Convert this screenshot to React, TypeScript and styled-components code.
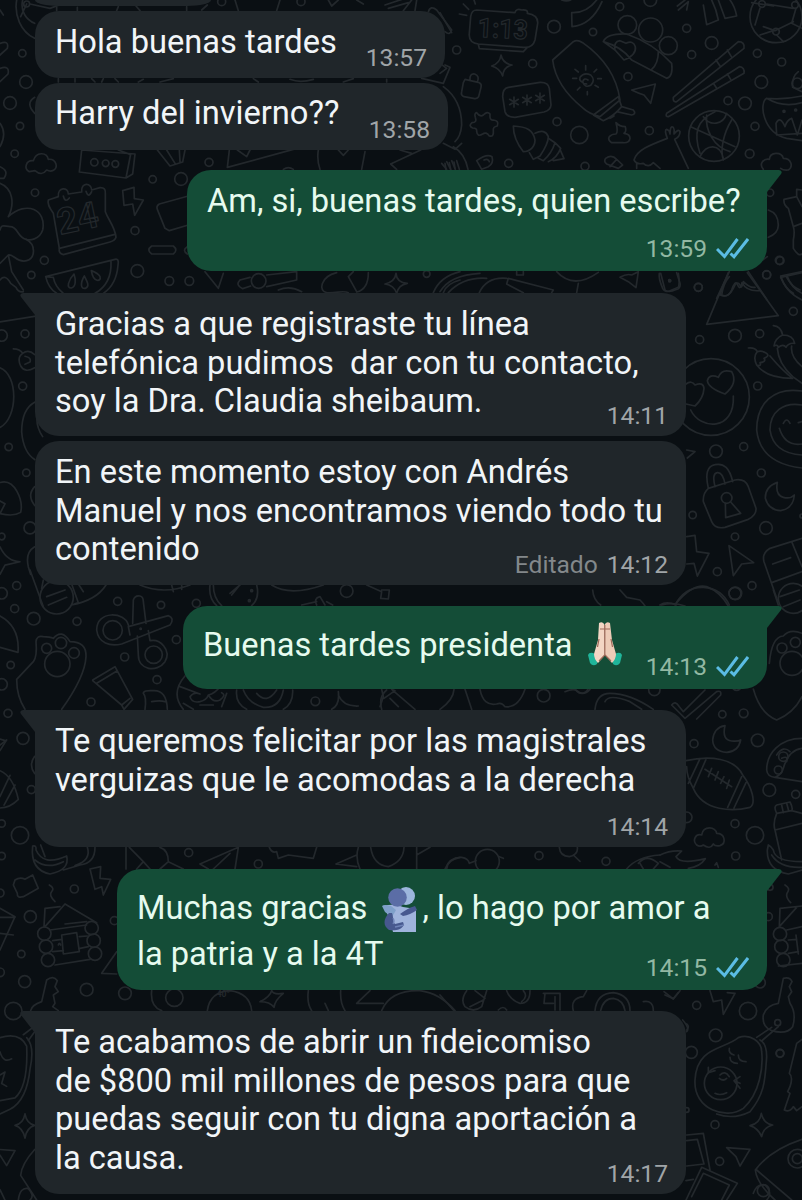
import React from "react";
import styled, { createGlobalStyle } from "styled-components";

const GlobalStyle = createGlobalStyle`
  * { box-sizing: border-box; }
  body { margin: 0; background: #0a0f13; }
`;

const Screen = styled.main`
  position: relative;
  width: 802px;
  height: 1200px;
  overflow: hidden;
  background: #0a0f13;
  font-family: Roboto, "Noto Sans", sans-serif;
`;

const Wallpaper = styled.svg`
  position: absolute;
  inset: 0;
  width: 802px;
  height: 1200px;
  fill: none;
  stroke: #23282c;
  stroke-width: 1.7;
  stroke-linecap: round;
  stroke-linejoin: round;
  path, circle, rect, ellipse, text { vector-effect: non-scaling-stroke; }
  text { font-family: Roboto, sans-serif; font-weight: 700; stroke-width: 1.2; }
`;

const Thread = styled.section`
  position: relative;
  display: flex;
  flex-direction: column;
  padding: 0 35px;
`;

const EarlierBubble = styled.div`
  width: 176px;
  height: 6px;
  background: #20262a;
  border-radius: 0 0 24px 24px / 0 0 6px 6px;
`;

type Side = "in" | "out";

const Bubble = styled.article<{ $side: Side; $w: number; $h: number; $gap: number; $tail?: boolean }>`
  position: relative;
  display: grid;
  flex: none;
  align-self: ${(p) => (p.$side === "in" ? "flex-start" : "flex-end")};
  width: ${(p) => p.$w}px;
  height: ${(p) => p.$h}px;
  margin-top: ${(p) => p.$gap}px;
  background: ${(p) => (p.$side === "in" ? "#20262a" : "#144d37")};
  color: ${(p) => (p.$side === "in" ? "#f1f5f8" : "#e6fbef")};
  border-radius: 24px;
  border-top-left-radius: ${(p) => (p.$tail && p.$side === "in" ? 0 : 24)}px;
  border-top-right-radius: ${(p) => (p.$tail && p.$side === "out" ? 0 : 24)}px;
`;

const Tail = styled.svg<{ $side: Side }>`
  position: absolute;
  top: 0;
  ${(p) => (p.$side === "in" ? "left: -15px;" : "right: -15px; transform: scaleX(-1);")}
  width: 16px;
  height: 23px;
  fill: ${(p) => (p.$side === "in" ? "#20262a" : "#144d37")};
`;

const Body = styled.p<{ $top: number; $leading: number }>`
  grid-area: 1 / 1;
  place-self: start;
  margin: 0;
  padding: ${(p) => p.$top}px 0 0 20px;
  font-size: 32.65px;
  line-height: ${(p) => p.$leading}px;
  white-space: pre;
`;

const Meta = styled.footer<{ $side: Side }>`
  grid-area: 1 / 1;
  place-self: end;
  display: flex;
  align-items: center;
  gap: 9px;
  padding: 0 18px ${(p) => (p.$side === "in" ? 8 : 10)}px 0;
  font-size: 24.6px;
  line-height: 24px;
  color: ${(p) => (p.$side === "in" ? "#a0a5a8" : "#92b8a3")};
`;

const Edited = styled.span`
  color: #83888b;
`;

const TickIcon = styled.svg`
  width: 33px;
  height: 22px;
  margin-top: -2px;
  fill: none;
  stroke: #5bbce4;
  stroke-width: 3;
`;

const EmojiArt = styled.svg<{ $w: number; $left: number; $right: number; $rise: number }>`
  display: inline-block;
  width: ${(p) => p.$w}px;
  height: 45px;
  margin: -12px ${(p) => p.$right}px -12px ${(p) => p.$left}px;
  vertical-align: ${(p) => p.$rise}px;
`;

const Ticks = () => (
  <TickIcon viewBox="0 0 33 22">
    <path d="M1 12 L8.5 19.5 L21.5 2" />
    <path d="M14.5 16.5 L18 19.8 L32 2" />
  </TickIcon>
);

const FoldedHands = () => (
  <EmojiArt $w={34} $left={7} $right={0} $rise={1} viewBox="0 0 34 45" role="img" aria-label="🙏🏻">
    <path d="M0 33 Q1 30 5 31 L11 34 L9 42 Q5 45 2 41Z" fill="#20b59a" />
    <path d="M34 33 Q33 30 29 31 L23 34 L25 42 Q29 45 32 41Z" fill="#20b59a" />
    <path d="M11 1 Q15 -1 16.6 3 L17 33 L10 41 Q6 37 6 32 L10 18Z" fill="#f3d6c4" />
    <path d="M22 1 Q18 -1 16.6 3 L17 33 L24 41 Q28 37 28 32 L24 18Z" fill="#edcbb7" />
    <path d="M16.8 3 V33 L11 39 M17 33 L23 39 M12 7 H22 M11 17 L9.5 25 M23 17 L24.5 25" fill="none" stroke="#9c6757" strokeWidth="1.2" />
  </EmojiArt>
);

const PeopleHugging = () => (
  <EmojiArt $w={36} $left={6} $right={5} $rise={-1} viewBox="0 0 36 45" role="img" aria-label="🫂">
    <circle cx="25" cy="9" r="9" fill="#9db6dc" />
    <path d="M2 19 Q14 16 22 20 L35 22 V45 H12 L8 30Z" fill="#9fb3dc" />
    <path d="M1 19 Q3 17 10 19 L15 23 L11 30 L4 25Z" fill="#7fa0ca" />
    <circle cx="16.5" cy="10.5" r="9.3" fill="#5b6da6" />
    <path d="M8 26 C2 32 2 39 8 43 C14 44 20 43 23 38 L22 35 L14 37 C11 34 13 31 11 26Z" fill="#47588f" />
    <path d="M19 27 Q27 21 34 19 L36 23 Q29 28 22 29Z" fill="#47588f" />
    <path d="M12 31 Q14 34 12 37 M23 38 L14 40" stroke="#6f83b8" fill="none" strokeWidth="1.3" />
  </EmojiArt>
);

interface PatchProps {
  x: number;
  y: number;
  sy?: number;
  d: string[];
  dots: number[][];
  children?: React.ReactNode;
}

/* One region of wallpaper doodles, authored on a 3x grid. */
const Patch = ({ x, y, sy = 1 / 3, d, dots, children }: PatchProps) => (
  <g transform={`translate(${x} ${y}) scale(${1 / 3} ${sy})`}>
    {d.map((path) => (
      <path key={path} d={path} />
    ))}
    {dots.map(([cx, cy, r]) => (
      <ellipse key={`${cx}-${cy}`} cx={cx} cy={cy} rx={r} ry={r / 3 / sy} />
    ))}
    {children}
  </g>
);

const Doodles = () => (
  <Wallpaper viewBox="0 0 802 1200" aria-hidden="true">
    <Patch
      x={0}
      y={0}
      dots={[
        [67, 160, 11], [78, 246, 19], [30, 309, 19], [60, 378, 11], [44, 461, 11], [283, 487, 11], [317, 490, 10], [346, 492, 10],
        [458, 538, 11], [543, 537, 19], [627, 487, 12], [105, 578, 11], [405, 692, 12], [133, 781, 12], [94, 825, 11], [412, 813, 19],
        [508, 843, 13], [568, 843, 13], [80, 12, 9], [665, 5, 12], [776, 843, 22], [1280, 822, 10], [1370, 150, 12], [903, 5, 12],
      ]}
      d={[
        "M50 0 C42 45 62 95 104 115 M68 0 C60 35 80 60 104 70 M90 12 L150 25 L190 10 M62 50 L80 12",
        "M0 130 Q28 120 22 145 L0 165 M0 205 Q30 195 24 222 L0 245 M0 30 L10 45",
        "M170 22 V32 M232 22 V32 M355 20 L350 32 M408 18 L420 32 M560 20 V32 M622 15 L605 30 M705 0 L715 32 M840 0 L830 32",
        "M985 0 L995 18 L1015 0 M1070 0 L1090 12 M1155 15 L1215 -5 M1165 25 L1225 8 M1235 0 L1210 32 M1250 0 L1245 32",
        "M1285 35 Q1292 15 1310 30 L1355 90 Q1350 108 1335 95 M1335 195 L1350 202 L1330 250 L1265 235",
        "M175 236 V246 M225 236 V246 M275 236 L285 246 M310 236 L305 246 M345 236 L355 246 M430 238 L415 246 M520 236 L480 246 M760 236 L775 246 M870 238 Q900 250 940 238 M1060 236 L1030 246 M1160 238 V246",
        "M104 292 Q75 310 104 340 M0 370 Q22 400 0 440 M0 500 Q28 512 12 535 H0",
        "M88 515 C70 505 78 480 100 482 C108 455 140 455 145 478 C168 475 178 505 158 512 Q150 515 140 510 Q125 530 105 512 Z",
        "M245 450 L405 462 L398 522 L378 534 L238 516 Z M392 462 L378 534 M355 450 L392 464",
        "M472 450 L510 498 L548 486 L555 450 M500 450 L525 490 M538 450 L540 485",
        "M688 450 L682 502 L880 448 M712 450 L740 470 L750 450 M955 450 Q950 480 960 508 M1015 450 L1030 466 L1045 450 M1095 455 L1085 508",
        "M1172 492 L1262 450 M1172 492 L1190 508 M1325 490 L1340 508 M1340 485 L1352 508 M1355 482 L1366 508 M1370 482 L1378 508 M850 508 Q865 498 880 508 M1200 450 L1235 460",
        "M145 600 L175 590 C172 560 205 560 205 582 L245 576 C242 545 275 548 275 570 L300 563 Q318 562 316 580 V635 C325 660 345 680 348 712 Q345 722 330 726 L190 764 Q175 760 178 745 L160 640 Q140 612 145 600 Z",
        "M178 745 L345 703 M190 588 Q195 610 208 594 M258 574 Q265 596 275 575",
        "M368 572 L402 562 L403 596 L430 600 L404 646 L398 612 L372 616 Z",
        "M565 588 L478 612 Q468 618 472 628 L495 685 L508 692 L565 675",
        "M455 738 H520 Q535 750 520 762 H455 Q438 750 455 738 Z M562 740 Q545 750 562 762",
        "M0 550 C38 565 45 610 25 650 M25 650 C80 600 140 630 128 690 C118 720 88 722 78 718 C50 710 55 680 30 680 C15 680 5 670 0 690",
        "M78 718 C110 735 105 775 80 782 C50 790 40 760 25 765 L35 815 L70 870 M0 790 L25 765 M0 840 Q15 820 32 850 L48 862 Q55 878 70 875",
        "M137 830 L345 778 Q358 775 354 795 C350 850 325 870 310 880 M137 830 Q145 865 170 880 M160 832 Q165 860 190 880 M333 785 C335 830 320 860 285 880 M137 830 L160 832",
        "M222 822 C205 840 198 865 214 864 C228 860 228 840 222 822 Z M253 828 C240 850 242 868 256 865 C270 860 262 845 253 828 Z M274 812 C280 850 305 845 300 830 Q295 820 274 812 Z",
        "M615 815 L655 865 L670 820 M720 840 L750 832 M800 825 L890 815 V840 L800 860 M752 858 L728 866 Q705 855 720 840 M835 870 Q870 855 905 875",
        "M1010 818 C960 830 955 875 980 878 C1010 880 1030 870 1045 878 M1060 815 L1045 830 L1070 875 M1105 818 C1105 850 1095 870 1070 876 M1188 820 Q1190 848 1222 850 Q1195 855 1190 880 Q1182 855 1155 852 Q1185 845 1188 820 M1300 878 Q1320 830 1380 815 M1330 878 Q1340 850 1380 840",
      ]}
    >
      <text x="0" y="0" fontSize="108" transform="translate(180 704) rotate(-12)">24</text>
    </Patch>

    <Patch
      x={440}
      y={0}
      dots={[
        [342, 80, 19], [278, 191, 12], [459, 96, 11], [539, 20, 12], [631, 0, 19], [740, 85, 12], [815, 129, 19], [755, 164, 12],
        [952, 160, 12], [1025, 186, 12], [964, 246, 19], [864, 302, 12], [915, 310, 19], [945, 379, 12], [628, 392, 12], [564, 230, 12],
        [351, 365, 12], [418, 405, 26], [206, 490, 12], [435, 499, 12], [929, 461, 13], [562, 75, 28], [632, 90, 36], [685, 137, 27],
        [822, 408, 76], [1008, 50, 78], [966, 12, 10], [1008, 95, 10], [1065, 15, 10], [1032, 334, 3], [1067, 330, 3], [990, 578, 11],
        [1018, 781, 12], [980, 825, 12], [775, 862, 12], [689, 842, 3], [1072, 250, 16],
      ]}
      d={[
        "M110 30 L225 38 Q228 24 245 30 Q265 28 262 40 Q295 45 293 70 L285 120 Q278 145 250 142 L115 132 Q85 128 88 100 L92 50 Q95 30 110 30 Z M115 133 L118 146 L250 155 L262 142",
        "M58 42 L80 46 M70 12 L86 28 M102 0 L106 12 M0 38 L35 98",
        "M183 165 Q188 190 216 195 Q190 200 188 228 Q180 205 155 198 Q180 190 183 165 Z",
        "M75 238 L118 248 Q126 252 123 262 L116 290 Q112 298 100 295 L72 290 Q62 286 65 275 L70 248 Z M90 240 Q88 220 104 222 Q120 228 112 246",
        "M205 262 L300 247 Q325 246 328 265 L333 315 Q332 330 312 336 L225 352 Q200 352 195 335 L188 290 Q188 265 205 262 Z",
        "M395 38 Q440 40 470 0 M395 38 L396 80 Q455 75 486 5 M392 0 Q380 5 365 0",
        "M338 180 L400 125 Q412 118 428 128 C495 175 530 230 540 300 L480 350 Q445 340 430 325 C380 285 345 240 338 180 Z M460 345 L535 290 L545 320 Q520 350 490 362 Z M545 320 L580 330 Q590 342 575 345 L530 335 M510 355 L522 348",
        "M440 252 Q415 245 420 232 Q432 215 452 225 Q468 240 452 256 Q435 265 428 245 Q432 232 444 240 M437 197 V210 M470 208 L462 216 M484 236 H473 M475 262 L465 256 M442 275 V284 M412 270 L420 262 M398 235 H410 M405 208 L415 216",
        "M490 125 Q500 100 560 102 Q640 130 695 190 Q700 230 680 235 L575 180 Q545 140 490 125 M490 125 L525 150 M655 155 Q655 190 635 208 M552 180 L525 150 Q520 125 540 122 L558 130 Q580 120 586 140 Q590 165 552 180 Z",
        "M575 270 L646 252 L632 310 L612 285 Q595 280 575 270 Z",
        "M700 292 L895 125 Q915 125 912 145 L710 305 Q698 308 700 292 Z M680 340 L898 200 Q915 202 912 220 L685 350 Q675 350 680 340 Z M828 180 L840 198 M862 150 L874 170 M820 250 L830 265 M862 222 L872 238",
        "M715 30 L745 5 L740 30 M790 15 L800 74 L835 60 Q830 30 815 0 M855 55 L890 48 Q885 20 870 0 M855 55 L835 0 M712 18 L735 0",
        "M935 8 L1000 18 M980 12 L1060 25 M960 25 L945 75 M970 80 L1005 92 L1060 65 M1010 105 L1030 125 M1068 25 L1055 70 L1086 85 M1000 92 L960 105",
        "M1075 215 Q1055 230 1058 262 L1086 275 M980 295 Q1030 300 1086 288 M980 295 C955 310 970 400 1040 415 L1086 422 M980 295 Q1030 325 1086 308 M1010 405 L1008 370 Q1020 345 1035 380 Q1040 360 1055 355 L1072 405 L1086 360 M1010 405 L1086 400",
        "M110 338 Q120 352 130 345 Q142 332 150 342 Q148 362 160 360 Q178 362 172 378 Q158 380 160 392 Q162 412 148 408 Q138 394 128 402 Q112 412 110 395 Q112 384 98 384 Q84 378 96 368 Q112 368 106 352 Q102 340 110 338 Z",
        "M220 378 C260 380 280 390 285 420 C285 440 270 455 250 455 C230 430 220 405 220 378 Z M285 400 Q315 385 325 410 Q325 430 300 468 L280 478 L268 458 M325 415 L345 428 Q335 460 310 482 L295 475 M345 428 L362 445 Q350 475 325 485 M360 448 L372 476 L340 482",
        "M528 368 Q538 380 556 380 Q560 395 552 400 Q570 402 570 415 Q568 430 548 428 H515 Q502 420 508 410 Q515 402 528 402 Q535 395 528 368",
        "M582 480 C590 450 630 435 682 415 Q672 390 680 388 Q690 392 690 402 Q690 375 700 382 Q705 390 702 402 Q715 385 720 395 Q720 410 704 418 L745 505 M582 480 Q590 495 610 490 Q625 505 640 488 L660 505 M590 492 V505",
        "M497 475 Q515 462 530 478 L548 495 L535 505 L500 492 Q490 485 497 475 M510 500 L530 478",
        "M825 335 C770 360 760 400 780 460 M790 350 C810 380 850 375 860 340 M752 380 L885 440 M780 470 C800 430 840 430 850 475 M875 360 C850 400 840 450 850 480 M800 345 C795 390 820 440 870 455",
        "M970 508 C955 490 972 475 988 478 C990 455 1025 455 1030 475 C1055 475 1060 500 1045 510 Q1030 512 1022 505",
        "M1086 570 L1070 568 V590 L1032 598 Q1030 615 1045 625 L1060 680 Q1065 695 1060 720 V745 Q1075 770 1086 762 M1070 590 L1086 620 M1060 680 L1086 670",
        "M985 630 Q1015 640 1015 675 Q1015 700 985 712 M968 780 L982 770",
        "M10 260 Q65 300 65 375 Q62 410 45 425 M10 430 L45 448 L65 430 M40 440 Q75 460 84 508 M15 490 L18 508 M28 488 L32 508 M42 486 L45 505 M110 482 Q140 460 156 470 Q162 490 145 500 L125 508 Z M132 480 Q145 475 148 485 M0 190 L20 205 L0 220",
        "M0 875 Q30 825 120 820 M25 878 Q70 830 140 835 M118 878 Q140 830 200 835 M205 835 L340 870 L335 878 M205 835 L200 852 L250 878 M350 815 Q400 870 475 817 M415 850 L410 878 M230 815 V825 H250 V815",
        "M540 832 Q560 820 575 825 L595 815 L588 863 L565 845 Z M658 820 Q655 835 668 865 Q675 878 690 872 L715 862 Q720 850 715 820",
        "M868 815 L830 895 M925 815 L980 898 M868 830 Q850 850 845 885 Q865 895 880 865 Q890 840 900 855 Q905 870 910 845 Q930 865 945 862 M1022 832 L1086 818 M1022 832 Q1040 870 1060 880 M1040 832 Q1055 860 1080 870",
      ]}
    >
      <text x="0" y="0" fontSize="80" textLength="150" lengthAdjust="spacingAndGlyphs" transform="translate(112 110) rotate(3)">1:13</text>
      <g stroke="#23282c">
        <path d="M222 291 V321 M209 298 L235 314 M209 314 L235 298 M261 285 V315 M248 292 L274 308 M248 308 L274 292 M300 279 V309 M287 286 L313 302 M287 302 L313 286" />
      </g>
    </Patch>

    <Patch
      x={660}
      y={260}
      dots={[
        [115, 82, 12], [320, 44, 12], [400, 154, 12], [119, 239, 12], [225, 227, 19], [299, 221, 12], [293, 378, 12], [153, 411, 115],
        [168, 574, 19], [251, 560, 12], [304, 639, 12], [318, 804, 19], [98, 765, 11], [225, 830, 11], [172, 935, 12], [226, 1000, 19],
        [276, 977, 12], [200, 714, 16], [360, 2, 12], [29, 62, 3], [400, 1015, 45], [426, 768, 6],
      ]}
      d={[
        "M2 40 L15 90 Q25 100 50 88 Q62 85 60 70 L50 38 M205 38 L140 193 L355 167 L262 38 M205 38 Q190 70 180 105 Q205 115 215 90 Q225 60 232 72 Q240 95 246 68 Q260 95 298 92",
        "M362 48 L426 35 M362 48 Q375 95 426 120 M382 50 Q395 85 426 100",
        "M340 197 Q362 198 368 225 Q345 235 342 258 Q352 252 355 262 Q370 250 378 262 Q385 248 404 250 Q400 225 368 225 M352 265 Q355 310 398 350 L426 370 M395 258 Q390 290 426 320",
        "M265 264 Q285 262 292 275 Q278 290 290 315 Q305 320 300 308 Q320 305 312 295 Q330 288 320 280 Q305 270 292 275 M290 315 Q320 355 398 355 Q370 335 330 288",
        "M78 372 Q95 360 105 375 Q130 365 132 385 Q130 415 105 438 L78 432 M142 362 Q148 340 175 352 Q185 325 215 335 Q235 370 195 402 Q145 385 142 362 Z M92 450 C120 510 225 515 220 408",
        "M426 393 C340 380 290 430 290 510 Q300 610 426 624 M426 435 C370 425 330 455 330 510 Q340 580 426 585 M358 505 Q375 560 426 552 M370 490 Q380 470 390 490 M415 488 L426 485",
        "M80 570 L105 575 L82 594 M145 685 Q130 620 165 614 Q205 605 218 665 M165 680 Q155 640 172 638 Q188 636 195 672 M145 685 L225 660 Q255 655 265 680 L288 745 Q290 765 265 778 L195 802 Q165 808 155 785 L130 725 Q128 700 145 685 Z M196 730 L197 773 L242 760 L212 726",
        "M352 667 Q345 705 370 712 Q390 718 403 705 Q400 745 362 752 Q325 750 316 715 Q315 680 352 667 Z",
        "M80 830 L105 826 L110 875 L147 880 L112 948 L102 910 L80 912 M207 857 L281 908 L245 912 L220 947 Z",
        "M426 835 L330 865 Q305 880 312 905 L352 1020 M395 845 L426 920 M338 912 L392 893 M335 968 L426 935 M360 1010 L418 990 M370 1040 L420 1020 M45 1035 Q75 980 130 982 Q185 985 208 1035 M0 1035 Q20 1022 48 1035",
      ]}
    />

    <Patch
      x={0}
      y={570}
      dots={[
        [5, 70, 17], [50, 47, 12], [44, 116, 12], [101, 146, 19], [231, 154, 12], [32, 285, 11], [5, 343, 17], [24, 430, 12],
        [353, 94, 12], [483, 105, 11], [529, 209, 12], [374, 261, 12], [471, 329, 12], [273, 396, 12], [183, 219, 17], [140, 235, 15],
        [222, 249, 16], [172, 282, 38], [338, 181, 29], [461, 254, 26], [589, 100, 12], [1040, 63, 19], [946, 394, 13], [170, 82, 50],
        [422, 176, 2], [755, 62, 3], [748, 92, 3], [69, 505, 18],
      ]}
      d={[
        "M0 138 Q60 170 54 247 L0 232 M90 0 L130 110 M130 30 L125 55 M215 42 L235 98 L215 105 Q290 90 318 45 M235 42 L250 65 M140 80 L195 60 M145 105 L200 82",
        "M420 45 Q490 75 570 45 M515 45 L520 65 M545 45 V58 M630 45 Q625 85 650 107 M640 45 Q640 85 665 107 M770 45 Q780 85 755 107 M690 70 L720 45 M695 75 L715 50 M815 45 Q870 80 970 45 M905 105 L950 95 M950 105 Q940 85 960 80 L975 105 M980 95 L998 105 M1100 45 L1145 65 L1142 85 L1165 87 L1168 60 L1145 60",
        "M108 215 Q110 195 130 200 Q150 200 160 205 Q185 175 210 215 Q260 215 258 260 Q255 320 185 418 M108 215 Q112 260 100 275 L50 328 Q50 380 75 418",
        "M385 165 C375 125 290 120 290 180 C295 220 330 230 365 222 L510 165 Q525 145 505 137 L385 170 L390 195 M398 160 L400 90 Q405 75 420 78 Q430 80 430 95 L438 160 M412 198 L415 255 C415 300 470 310 495 275 C515 240 480 205 450 212 L445 182",
        "M278 330 L345 290 L398 388 L372 418 L365 405 L278 332 M290 340 L352 302 M365 405 L390 385 M430 370 Q430 360 460 362 Q500 360 502 418 M430 370 Q440 380 435 418 M455 395 Q480 390 495 395",
        "M555 318 Q510 370 550 418 M600 372 Q580 365 570 380 Q575 400 600 395 Q620 390 625 375 Q640 400 660 390 Q680 375 665 368 M540 350 L600 372 M550 400 L580 418 M600 405 H640 M680 370 L665 410 M660 350 Q645 370 625 375 M710 360 Q705 400 740 418 M730 360 Q745 400 790 412 Q840 415 850 360 M878 360 Q880 400 850 418 M770 370 Q800 405 830 360 M1015 365 Q1020 405 995 418 M1015 375 Q1030 410 1075 408 M1145 418 Q1135 380 1160 360 M1170 385 L1195 410",
        "M0 525 L20 510",
      ]}
    />

    <Patch
      x={560}
      y={590}
      dots={[[525, 10, 18], [487, 373, 11], [551, 370, 13], [666, 174, 15], [706, 157, 15], [696, 220, 36], [283, 300, 17], [65, 290, 20]]}
      d={[
        "M98 0 Q100 30 122 45 M180 0 L200 22 L240 30 Q250 40 255 48 M305 45 Q340 35 375 48 M350 38 Q400 -20 440 -10 Q480 5 505 48 M640 0 L655 45",
        "M628 220 Q635 140 670 138 Q690 115 726 130 M580 297 Q600 370 650 390 Q700 370 726 320 M105 358 Q110 310 150 310 Q210 310 280 358 M135 335 Q145 310 210 335 L245 358 M335 345 Q345 330 358 350 L370 365 L435 300 M335 345 L375 385 L470 305 Q485 300 482 315 L410 387 M520 297 Q530 305 540 297",
      ]}
    />

    <Patch
      x={380}
      y={680}
      dots={[[491, 47, 19]]}
      d={[
        "M5 28 L10 50 L0 80 M12 55 L45 32 L35 28 L105 88 M180 88 Q220 60 222 28 M255 28 L275 88 M300 28 Q310 80 350 72 Q365 65 375 80 Q415 85 435 28 M555 35 Q580 25 590 32 Q610 50 630 28",
      ]}
    />

    <Patch
      x={660}
      y={680}
      dots={[[102, 191, 12], [293, 181, 19], [328, 330, 19], [407, 343, 12], [225, 431, 12], [285, 466, 26], [227, 528, 12], [80, 412, 16], [370, 230, 14], [355, 270, 12]]}
      d={[
        "M195 137 Q185 180 215 183 Q235 185 242 180 Q235 215 200 217 Q160 215 158 180 Q162 142 195 137 Z",
        "M78 242 C150 225 225 235 248 285 C275 320 290 370 270 382 C220 395 130 395 100 325 Q80 290 80 260 M120 236 L85 310 M138 238 L100 325 M245 290 L203 382 M258 308 L222 384 M135 268 L215 320 M155 265 L145 290 M175 275 L165 300 M192 290 L182 310 M208 300 L200 325",
        "M426 175 C360 175 320 220 320 270 Q322 290 345 292 L426 305 M426 205 Q385 210 370 265 Q365 285 345 292 M350 225 Q370 195 390 215 M365 235 Q385 225 380 245",
        "M110 495 C95 480 108 460 125 465 C130 435 168 440 170 460 C195 460 200 490 180 497 Q165 500 160 492 Q150 510 130 495 Q120 502 110 495 Z",
        "M350 400 Q340 380 350 375 L390 366 Q400 385 395 392 M365 375 L370 398 M380 370 L386 392 M350 400 L395 392 L426 400 M350 400 Q338 430 345 450 L365 540 M345 450 L426 430",
        "M325 495 Q335 500 340 510 Q345 545 426 545 M322 510 Q320 570 385 582 L426 570 M325 495 L322 510 M335 525 Q360 565 426 562",
        "M0 525 Q30 510 65 513 L48 530 Q60 555 136 536 Q120 560 85 565 M0 545 L30 562 M165 555 L170 548 L175 562",
      ]}
    />

    <Patch
      x={0}
      y={820}
      dots={[
        [60, 46, 26], [5, 108, 11], [566, 98, 12], [775, 132, 12], [223, 207, 12], [91, 290, 18], [64, 402, 11], [0, 219, 12], [0, 457, 13],
        [74, 485, 18], [40, 573, 26], [260, 509, 19], [375, 520, 19], [523, 533, 26], [343, 302, 12], [133, 341, 20], [138, 380, 20],
        [144, 420, 20], [275, 324, 20], [281, 362, 20], [285, 401, 20],
      ]}
      d={[
        "M98 78 Q110 75 108 90 Q130 140 200 108 Q210 150 150 162 Q90 150 98 78 M105 120 Q140 150 190 125 M122 75 L135 110 M190 150 L240 135 Q285 130 285 82 M262 82 Q275 120 225 137",
        "M45 180 Q60 170 75 178 L98 165 L115 205 L70 230 Q50 235 52 220 L40 195 Z M148 195 Q165 205 155 215 Q145 225 165 245",
        "M270 147 L302 140 L300 175 L332 178 L310 225 L305 200 L285 208 Z M378 82 V147 M388 82 L430 125 L410 147 M430 125 L450 147 M480 82 Q505 90 505 125 L550 147 M505 125 L480 147 M600 132 L715 82 L705 147 M600 132 L625 147 M640 147 L690 100 M808 82 Q815 100 830 95 L835 115 L865 105 L940 115 L950 82 M1008 132 L1070 105 M1008 132 L1070 140 M1075 82 Q1065 115 1080 147 M1112 82 Q1120 135 1165 140 Q1210 125 1212 82 M1250 82 V147 M1250 105 L1290 82 M1340 147 Q1340 120 1380 112",
        "M0 265 L45 290 L0 390 M0 292 L45 292 M0 340 L40 345 M132 320 L135 265 L180 260 M135 320 L195 252 L290 308 M195 312 L260 305 M150 330 L260 315 M158 362 L185 358 M158 395 L190 392 M165 435 L270 418 M185 345 L230 338 L238 395 L190 402 Z M238 350 L262 348 M240 385 L265 380 M175 375 Q178 365 182 375",
        "M140 480 Q160 465 172 482 L165 500 L175 515 L160 525 L165 550 L158 560 L175 572 M140 480 L125 545 Q95 555 92 572 M305 460 L350 395 M305 460 L350 462",
        "M455 512 Q450 560 485 572 M622 572 Q630 515 690 512 Q750 520 755 572 M815 512 Q820 525 850 520 Q825 540 822 562 Q810 545 780 545 Q810 530 815 512 M925 512 Q920 550 935 572 M1022 512 Q1020 550 1035 572 M975 550 L985 572 M1110 512 L1070 550 H1150 M1145 572 Q1170 510 1260 512 Q1320 520 1365 572",
      ]}
    >
      <text x="650" y="532" fontSize="26" fill="#23282c" stroke="none">40°</text>
    </Patch>

    <Patch
      x={440}
      y={820}
      dots={[
        [498, 124, 12], [297, 107, 12], [142, 124, 36], [990, 202, 9], [985, 290, 12],
        [1020, 342, 20], [1024, 380, 20], [1030, 420, 20], [770, 556, 12], [924, 573, 26], [827, 646, 19], [754, 697, 18], [1020, 700, 11],
        [1013, 608, 9], [960, 488, 16],
      ]}
      d={[
        "M15 147 Q30 110 65 112 Q85 115 88 130 L108 122 M178 110 L190 115 M358 82 Q360 108 388 110 Q415 105 412 82 M400 105 L420 124 M560 147 Q590 110 660 105 M595 130 Q620 100 655 130 L640 147 M610 147 L600 130",
        "M1035 195 Q1052 205 1042 218 Q1035 230 1052 248 M1018 320 L1020 265 L1086 258 M1018 320 L1070 262 M1040 330 L1086 320 M1045 360 L1070 358 M1045 400 L1075 395 M1068 345 L1075 402 M1015 438 L1086 430",
        "M1030 475 Q1050 470 1056 485 L1048 500 L1055 515 L1045 530 L1050 550 Q1070 580 1058 620 Q1040 645 995 632 Q965 620 970 585 Q980 555 1015 550 Z",
        "M0 525 L40 570 M80 512 Q60 540 75 560 Q100 580 125 560 L140 512 M105 512 L135 535 M90 560 L130 540 M200 512 Q210 540 240 550 Q270 550 270 512 M250 512 Q265 530 245 545 M175 570 Q190 555 200 570 M310 520 H360 V570 M315 520 L312 550 H340 M345 530 V570 M400 572 Q390 535 430 530 L440 512 M465 572 Q470 520 520 518 Q570 525 570 572 M482 572 Q490 535 520 535 Q550 540 555 572 M610 545 Q640 540 640 572 M672 515 L700 537 L720 512",
        "M810 512 L820 545 L845 540 L850 583 L885 520 L862 518 M740 612 Q750 620 740 630",
      ]}
    />

    <Patch
      x={660}
      y={980}
      dots={[[360, 220, 12], [165, 434, 12], [179, 544, 12], [182, 310, 49], [412, 536, 28], [412, 536, 15], [310, 632, 18], [80, 390, 7]]}
      d={[
        "M105 300 C110 200 190 210 235 173 C270 160 305 185 305 215 C310 260 300 340 250 385 C200 420 100 390 105 300 Z M300 180 Q320 190 320 230 C315 300 315 340 270 395 Q220 420 170 402 M290 172 L335 142 M308 180 L355 140",
        "M208 205 Q205 220 222 225 M210 232 Q210 250 232 250 M235 225 Q235 245 258 245 M145 262 V278 L165 272 M240 290 L222 302 L240 310 M222 302 L240 325 M165 340 Q180 348 200 338 M178 295 Q190 305 200 295 M180 285 Q195 270 208 290",
        "M304 400 Q310 430 338 435 Q310 442 305 470 Q295 445 270 437 Q300 430 304 400 Z M426 178 L410 190 L388 280 Q400 290 390 320 L383 335 L390 340 L373 390 Q390 398 400 380 L410 392 L426 380",
        "M200 503 L270 508 L240 558 L228 530 Z M80 465 L130 460 L150 570 M80 482 L112 478 L132 552 L80 558 M125 562 L232 610 L200 660 M125 562 L78 660 M130 580 L208 615 L185 660 M130 580 L95 650 M78 602 L100 598",
        "M426 478 Q330 510 286 570 Q290 610 345 660 M290 570 L395 660 M280 640 Q290 610 315 615 Q340 640 320 660 M15 45 L40 56 L55 38 M68 120 Q90 145 80 155",
      ]}
    />

    <Patch
      x={0}
      y={300}
      sy={0.574}
      dots={[
        [75, 59, 12], [5, 62, 17], [68, 150, 12], [26, 256, 11], [79, 301, 11], [90, 397, 18], [5, 412, 10], [94, 853, 12], [5, 912, 11],
      ]}
      d={[
        "M0 38 L108 28 M40 85 Q60 85 68 93 Q50 100 62 115 Q75 128 104 118 M68 93 Q85 85 104 95 M75 98 Q95 100 90 108 L75 112",
        "M0 118 C55 130 55 205 0 222 M104 178 Q65 190 65 230 Q70 265 104 278 M125 175 Q95 210 128 238 M104 325 Q80 340 104 358",
        "M0 318 C45 310 70 350 62 370 Q40 378 0 372 L15 355 L0 350 M0 430 Q20 455 60 456 L15 462 L0 478 M104 430 Q75 440 85 465 L92 478",
        "M0 765 L18 768 L0 785 M0 820 Q40 830 55 870 Q30 885 0 885 M0 865 L30 828 M12 880 L45 845 M104 795 Q85 810 104 825",
        "M0 1285 Q60 1275 80 1300 Q85 1370 45 1390 L0 1395 M0 1310 Q10 1330 35 1322 M0 1350 L15 1345 L5 1365 L20 1370 M80 1285 Q105 1300 90 1340 Q80 1395 30 1410 L0 1418 M70 1280 L104 1265 M85 1290 L104 1275",
        "M75 1418 Q80 1435 104 1438 Q80 1442 75 1460 Q68 1442 45 1438 Q70 1435 75 1418 M0 1480 L45 1482 L20 1508 L0 1490 M104 1480 Q65 1505 62 1525 L110 1568 M55 1568 Q60 1545 85 1548 Q105 1560 90 1568 M0 1550 L15 1568",
      ]}
    />
  </Wallpaper>
);

interface Message {
  side: Side;
  w: number;
  h: number;
  gap: number;
  tail?: boolean;
  top?: number;
  leading?: number;
  edited?: boolean;
  time: string;
  body: React.ReactNode;
}

const messages: Message[] = [
  { side: "in", w: 410, h: 67, gap: 5, time: "13:57", body: "Hola buenas tardes" },
  { side: "in", w: 413, h: 67, gap: 4.5, top: 11.4, time: "13:58", body: "Harry del invierno??" },
  { side: "out", w: 580, h: 101, gap: 20.5, tail: true, time: "13:59", body: "Am, si, buenas tardes, quien escribe?" },
  { side: "in", w: 651, h: 143, gap: 22, tail: true, time: "14:11", body: "Gracias a que registraste tu línea\ntelefónica pudimos  dar con tu contacto,\nsoy la Dra. Claudia sheibaum." },
  { side: "in", w: 651, h: 143.5, gap: 5, edited: true, time: "14:12", body: "En este momento estoy con Andrés\nManuel y nos encontramos viendo todo tu\ncontenido" },
  { side: "out", w: 584, h: 82.5, gap: 21.5, tail: true, top: 19.5, time: "14:13", body: <>Buenas tardes presidenta <FoldedHands /></> },
  { side: "in", w: 651, h: 137, gap: 21.5, tail: true, time: "14:14", body: "Te queremos felicitar por las magistrales\nverguizas que le acomodas a la derecha" },
  { side: "out", w: 650, h: 121.5, gap: 21.5, tail: true, top: 16, leading: 46.6, time: "14:15", body: <>Muchas gracias <PeopleHugging />, lo hago por amor a{"\n"}la patria y a la 4T</> },
  { side: "in", w: 651, h: 183, gap: 21, tail: true, time: "14:17", body: "Te acabamos de abrir un fideicomiso\nde $800 mil millones de pesos para que\npuedas seguir con tu digna aportación a\nla causa." },
];

export default function App() {
  return (
    <Screen>
      <GlobalStyle />
      <Doodles />
      <Thread>
        <EarlierBubble />
        {messages.map((m) => (
          <Bubble key={m.time} $side={m.side} $w={m.w} $h={m.h} $gap={m.gap} $tail={m.tail}>
            {m.tail && (
              <Tail $side={m.side} viewBox="0 0 16 23">
                <path d="M16 0 H3 Q-1 0.5 1 4 L15 22 H16 Z" />
              </Tail>
            )}
            <Body $top={m.top ?? 12} $leading={m.leading ?? 38.6}>{m.body}</Body>
            <Meta $side={m.side}>
              {m.edited && <Edited>Editado</Edited>}
              <time>{m.time}</time>
              {m.side === "out" && <Ticks />}
            </Meta>
          </Bubble>
        ))}
      </Thread>
    </Screen>
  );
}
